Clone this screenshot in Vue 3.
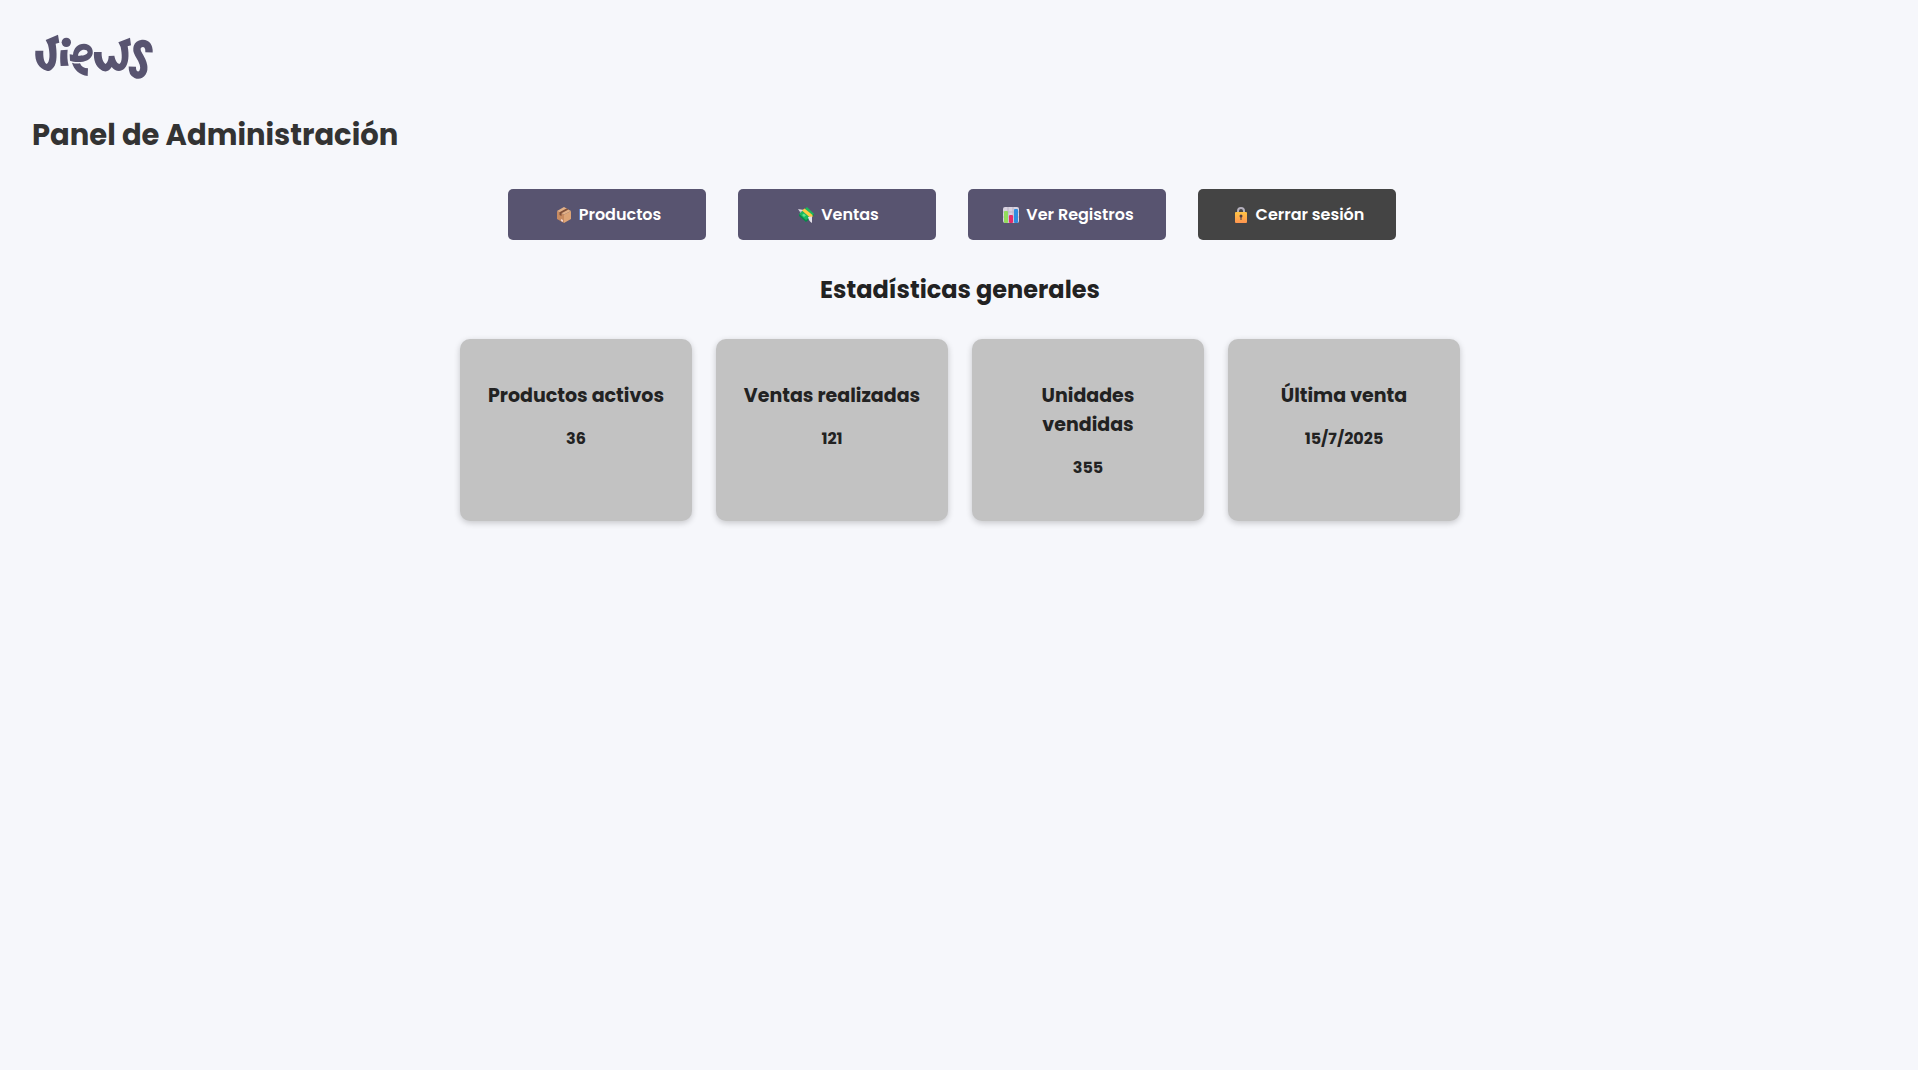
<script setup>
const actions = [
  { label: 'Productos', icon: 'box' },
  { label: 'Ventas', icon: 'money' },
  { label: 'Ver Registros', icon: 'chart' },
  { label: 'Cerrar sesión', icon: 'lock', dark: true },
]

const stats = [
  { title: 'Productos activos', value: '36' },
  { title: 'Ventas realizadas', value: '121' },
  { title: 'Unidades vendidas', value: '355' },
  { title: 'Última venta', value: '15/7/2025' },
]
</script>

<template>
  <div class="page">
    <header>
      <svg class="logo" viewBox="36 0 366 210" role="img" aria-label="Views">
        <g fill="#585470">
          <path d="M46 92L70 92C69 108 71 127 80 132C90 126 91 100 84 74L77 60L114 44L118 68L107 71C111 98 112 128 101 142C94 151 88 155 80 152C58 145 43 127 46 92Z" />
          <circle cx="139" cy="67" r="14" />
          <path d="M122 91L143 89C141 106 142 122 146 137L122 138C120 122 120 106 122 91Z" />
          <path fill-rule="evenodd" d="M149 103L159 104C161 84 173 71 192 71C211 72 221 86 218 101C214 119 195 126 174 126C164 126 156 124 150 122ZM174 107C188 108 202 105 203 97C203 91 198 89 192 89C183 89 175 96 174 107Z" />
          <path d="M156 128C164 131 173 131 180 130C184 140 192 145 204 145L203 168C179 164 162 150 156 128Z" />
          <path d="M222 96L245 96C244 112 249 128 257 132C264 127 266 115 266 108L283 107C285 118 290 129 298 132C308 126 306 102 302 81L295 67L330 53L333 76L323 79C328 105 326 133 314 145C302 158 286 155 275 141C268 153 257 159 244 150C226 139 220 119 222 96Z" />
        </g>
        <path d="M387 97C388 79 380 69 367 70C350 72 347 88 355 102C366 119 378 141 368 157C357 172 336 166 337 140" fill="none" stroke="#585470" stroke-width="22" />
      </svg>
      <h1>Panel de Administración</h1>
    </header>

    <nav class="actions">
      <button v-for="action in actions" :key="action.label" type="button" :class="{ dark: action.dark }">
        <svg v-if="action.icon === 'box'" class="icon" viewBox="0 0 22 16" aria-hidden="true">
          <path d="M4 4L11 7.500V16L4 12Z" fill="#c88b60" />
          <path d="M11 7.500L18 4V12L11 16Z" fill="#dda476" />
          <path d="M4 4L11 0L18 4L11 7.500Z" fill="#e2b087" />
          <path d="M15.500 2.600L13.500 1.500L6.500 5.200V8L8.500 9V6.300Z" fill="#805039" />
          <path d="M8 12L10 13V15L8 14Z" fill="#f0d5d3" />
        </svg>
        <svg v-else-if="action.icon === 'money'" class="icon" viewBox="0 0 22 16" aria-hidden="true">
          <path d="M3 2L9 3L8 7C6 7 5 5 3 2Z" fill="#d9d6e0" />
          <path d="M5 4L8 4L7 7Z" fill="#aaa6b5" />
          <path d="M4 7L12 0L19 7L11 14Z" fill="#19b75d" />
          <path d="M4 7L11 13L19 7V8L11 15L4 9Z" fill="#078a49" />
          <path d="M7 3.500L9.500 1.500L17.500 8V10L15.500 11Z" fill="#ffcb43" />
          <path d="M7 8L9 6.500L11 8.500L9 10Z" fill="#5be38b" />
          <path d="M13 10L17 9.500V16C15 15 13.500 13 13 10Z" fill="#e4e0e8" />
        </svg>
        <svg v-else-if="action.icon === 'chart'" class="icon" viewBox="0 0 22 16" aria-hidden="true">
          <rect x="3" width="16" height="16" rx="2" fill="#d9d3e0" />
          <path d="M3 5H19M3 10H19M8 0V16M13 0V16" stroke="#bcb5c8" />
          <rect x="4" y="4" width="4" height="12" rx="1" fill="#92dd5b" />
          <rect x="9" y="8" width="4" height="8" rx="1" fill="#e62c68" />
          <rect x="14" y="2" width="4" height="14" rx="1" fill="#2e8de0" />
        </svg>
        <svg v-else class="icon" viewBox="0 0 22 16" aria-hidden="true">
          <defs>
            <linearGradient id="lock-body" x2="0" y2="1">
              <stop stop-color="#ffc444" />
              <stop offset="1" stop-color="#ff9550" />
            </linearGradient>
          </defs>
          <path d="M8 6V4A3 3 0 0 1 14 4V6" fill="none" stroke="#b5b0bd" stroke-width="2" />
          <rect x="5" y="5" width="12" height="11" rx="1" fill="url(#lock-body)" />
          <circle cx="11" cy="9" r="1.500" fill="#4c3c45" />
          <path d="M10.500 9H11.500V13H10.500Z" fill="#4c3c45" />
        </svg>
        <span>{{ action.label }}</span>
      </button>
    </nav>

    <main>
      <h2>Estadísticas generales</h2>
      <section class="stats">
        <article v-for="stat in stats" :key="stat.title" class="card">
          <h3>{{ stat.title }}</h3>
          <p>{{ stat.value }}</p>
        </article>
      </section>
    </main>
  </div>
</template>

<style>
body {
  margin: 0;
  background: #f6f7fb;
}
</style>

<style scoped>
.page {
  padding: 20px 30px 32px 32px;
  color: #222;
  font-family: Poppins, Inter, sans-serif;
}

.logo {
  display: block;
  width: 122px;
  height: 70px;
}

h1 {
  margin: 24px 0 32px;
  color: #333;
  font-size: 29px;
  font-weight: 700;
  line-height: 43px;
}

.actions {
  display: flex;
  flex-wrap: wrap;
  gap: 32px;
  max-width: 904px;
  margin: 0 auto;
}

button {
  display: flex;
  align-items: center;
  justify-content: center;
  gap: 4px;
  width: 198px;
  height: 51px;
  padding: 0;
  border: 0;
  border-radius: 5px;
  background: #585470;
  color: #fff;
  font: inherit;
  font-size: 16px;
  font-weight: 600;
  cursor: pointer;
}

button.dark {
  background: #444;
}

.icon {
  width: 22px;
  height: 16px;
}

h2 {
  margin: 32px 0;
  font-size: 24px;
  font-weight: 700;
  line-height: 35px;
  text-align: center;
}

.stats {
  display: grid;
  grid-template-columns: repeat(auto-fit, minmax(200px, 1fr));
  gap: 24px;
  max-width: 1000px;
  margin: 0 auto;
}

.card {
  padding: 42px 24px 40px;
  border-radius: 10px;
  background: #c2c2c2;
  box-shadow: 0 2px 6px rgba(0, 0, 0, 0.2);
  text-align: center;
}

h3 {
  margin: 0 0 16px;
  font-size: 19px;
  font-weight: 700;
  line-height: 29px;
}

p {
  margin: 0;
  font-size: 16px;
  font-weight: 700;
  line-height: 26px;
}
</style>
